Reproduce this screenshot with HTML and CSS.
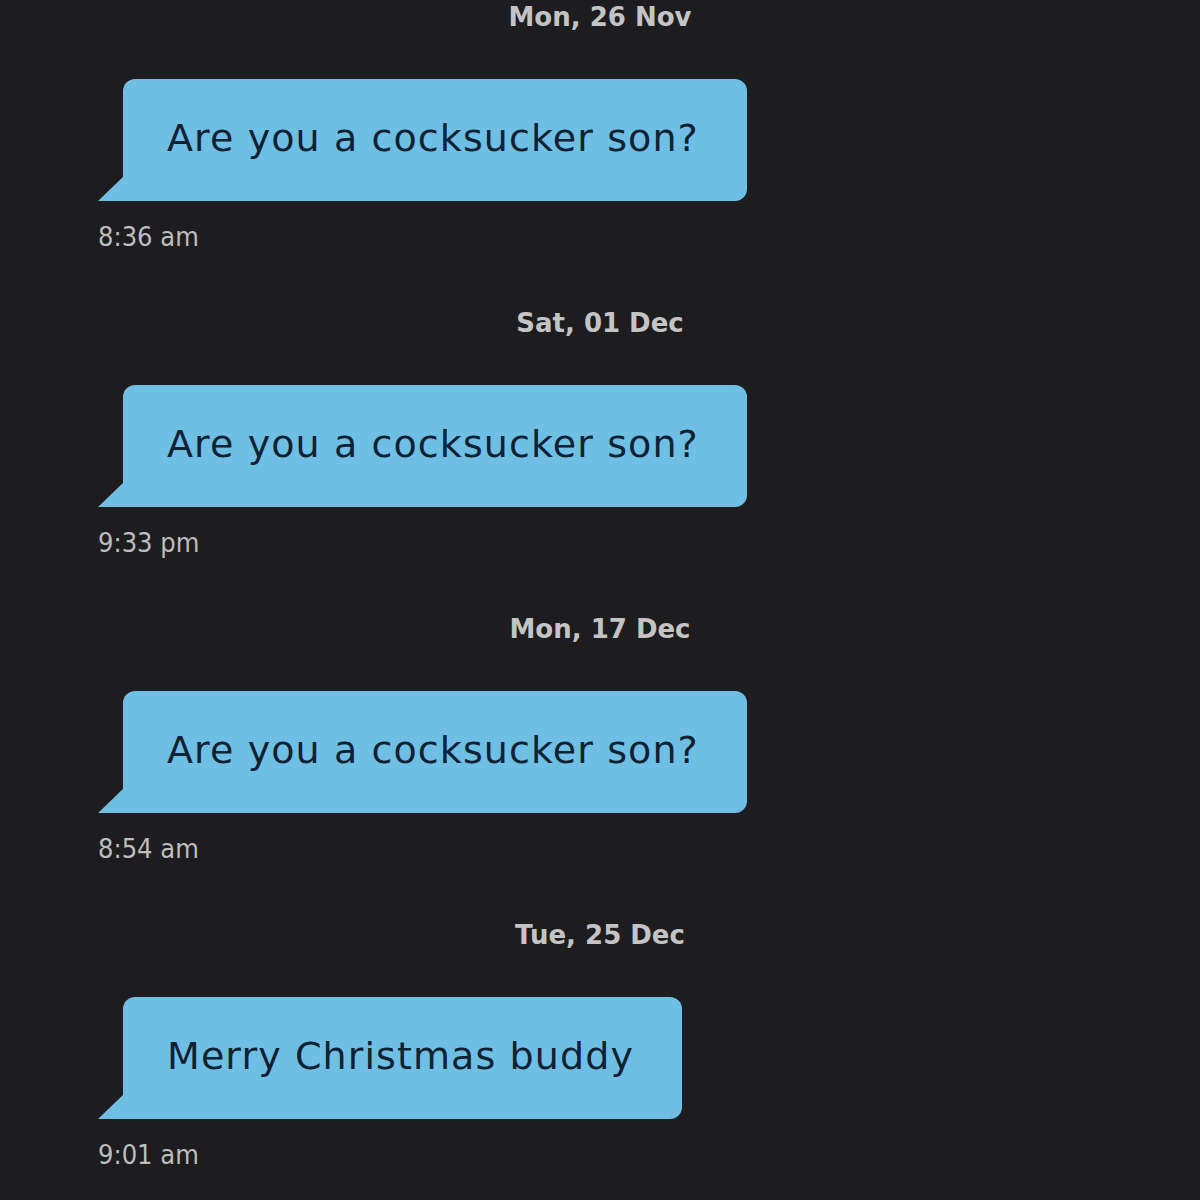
FILE: index.html
```html
<!DOCTYPE html>
<html>
<head>
<meta charset="utf-8">
<link rel="stylesheet" href="styles.css">
</head>
<body>
<div class="chat">
  <div class="group">
    <div class="date">Mon, 26 Nov</div>
    <div class="bubble">Are you a cocksucker son?</div>
    <div class="time">8:36 am</div>
  </div>
  <div class="group">
    <div class="date">Sat, 01 Dec</div>
    <div class="bubble">Are you a cocksucker son?</div>
    <div class="time">9:33 pm</div>
  </div>
  <div class="group">
    <div class="date">Mon, 17 Dec</div>
    <div class="bubble">Are you a cocksucker son?</div>
    <div class="time">8:54 am</div>
  </div>
  <div class="group">
    <div class="date">Tue, 25 Dec</div>
    <div class="bubble">Merry Christmas buddy</div>
    <div class="time">9:01 am</div>
  </div>
</div>
</body>
</html>
```
FILE: styles.css
```css
html, body {
  margin: 0;
  padding: 0;
}
body {
  width: 1200px;
  height: 1200px;
  overflow: hidden;
  background: #1d1d1f;
  font-family: "DejaVu Sans Condensed", "DejaVu Sans", sans-serif;
}
.chat {
  display: flex;
  flex-direction: column;
  gap: 54px;
  padding: 0 0 0 98px;
}
.group {
  display: flex;
  flex-direction: column;
  align-items: flex-start;
}
.date {
  align-self: stretch;
  margin-left: -98px;
  text-align: center;
  font-family: "DejaVu Sans", sans-serif;
  font-weight: 700;
  font-size: 26px;
  line-height: 34px;
  color: #c4c4c4;
}
.bubble {
  position: relative;
  margin-top: 45px;
  margin-left: 25px;
  height: 122px;
  box-sizing: border-box;
  display: flex;
  align-items: center;
  padding: 0 48px 4px 44px;
  background: #6fbfe5;
  border-radius: 12px 12px 12px 0;
  color: #0f2233;
  font-family: "DejaVu Sans", sans-serif;
  font-size: 38px;
  letter-spacing: 1.1px;
}
.bubble::before {
  content: "";
  position: absolute;
  left: -25px;
  bottom: 0;
  width: 26px;
  height: 25px;
  background: #6fbfe5;
  clip-path: polygon(100% 0, 100% 100%, 0 100%);
}
.time {
  margin-top: 21px;
  font-size: 27px;
  line-height: 30px;
  color: #bdbdbd;
}
```
